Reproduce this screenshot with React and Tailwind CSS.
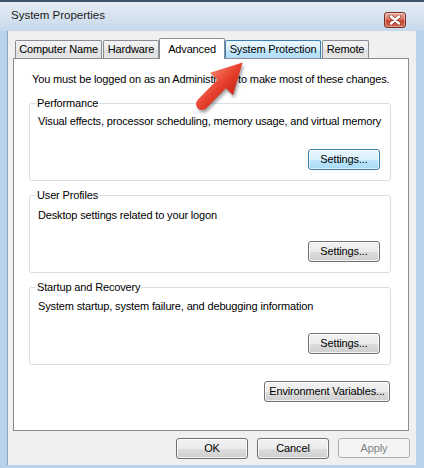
export default function App() {
  const btn =
    "h-[21px] rounded-[3px] border border-[#707070] bg-[linear-gradient(to_bottom,#f2f2f2_0%,#ebebeb_50%,#dddddd_51%,#cfcfcf_100%)] shadow-[inset_0_0_0_1px_rgba(255,255,255,0.75)] text-black flex items-center justify-center leading-none";
  const btnFocus =
    "h-[21px] rounded-[3px] border border-[#3c7fb1] bg-[linear-gradient(to_bottom,#eaf6fd_0%,#d9f0fc_50%,#bee6fd_51%,#a7d9f5_100%)] shadow-[inset_0_0_0_1px_rgba(255,255,255,0.6)] text-black flex items-center justify-center leading-none";
  const tab =
    "h-[18px] border border-b-0 border-[#898c95] rounded-t-[2px] bg-[linear-gradient(to_bottom,#f3f3f3_0%,#ebebeb_50%,#dedede_51%,#e5e5e5_100%)] flex items-center justify-center whitespace-nowrap";

  return (
    <div className="relative w-[424px] h-[468px] overflow-hidden bg-[#b9d1ea] font-['Liberation_Sans',Arial,sans-serif] text-[11px] tracking-[-0.15px] text-black flex flex-col">
      {/* title bar */}
      <div className="h-[31px] border-t-2 border-[#3e546b] bg-[linear-gradient(to_bottom,#e4ecf5,#d3e0ee_60%,#c6d9ed)] flex items-center pl-[11px] pr-[18px]">
        <span className="text-[11.5px] tracking-normal text-[#1b1b1b] mt-[-1px]">System Properties</span>
        <div className="ml-auto mt-[6px] w-[22px] h-[16px] rounded-[3px] border border-[#7c2f25] bg-[linear-gradient(to_bottom,#eab0a2_0%,#d9735f_45%,#c4442f_55%,#d06a52_100%)] shadow-[inset_0_0_0_1px_rgba(255,255,255,0.35)] flex items-center justify-center">
          <svg width="12" height="10" viewBox="0 0 12 10">
            <path d="M2 1.5 L10 8.5 M10 1.5 L2 8.5" stroke="#5b2119" strokeWidth="4" strokeLinecap="round" opacity="0.55" />
            <path d="M2 1.5 L10 8.5 M10 1.5 L2 8.5" stroke="#ffffff" strokeWidth="2.4" strokeLinecap="round" />
          </svg>
        </div>
      </div>

      {/* client area */}
      <div className="ml-[7px] mr-[8px] mb-[3px] flex-1 bg-[#f0f0f0] border-l border-[#8aa4c0] flex flex-col">
        {/* tabs */}
        <div className="relative z-10 mt-[7px] h-[20px] pl-[7px] flex items-end">
          <div className={tab + " w-[87px]"}>Computer Name</div>
          <div className={tab + " w-[56px] ml-[1px]"}>Hardware</div>
          <div className="h-[21px] mb-[-1px] w-[66px] border border-b-0 border-[#898c95] rounded-t-[2px] bg-white flex items-start justify-center pt-[2px]">
            Advanced
          </div>
          <div className="h-[18px] w-[96px] border border-b-0 border-[#3c7fb1] rounded-t-[2px] bg-[linear-gradient(to_bottom,#eaf6fd_0%,#d9f0fc_50%,#bee6fd_51%,#b3def6_100%)] flex items-center justify-center whitespace-nowrap">
            System Protection
          </div>
          <div className={tab + " w-[47px] ml-[1px]"}>Remote</div>
        </div>

        {/* panel */}
        <div className="ml-[5px] w-[396px] h-[373px] border border-[#898c95] bg-white pl-[15px] pr-[17px] flex flex-col">
          <div className="mt-[13px] pl-[3px] leading-[15px] whitespace-nowrap">
            You must be logged on as an Administrator to make most of these changes.
          </div>

          <fieldset className="mt-[9px] border border-[#d5dfe5] rounded-[3px] pl-[8px] pr-[10px] pb-[10px] min-w-0">
            <legend className="px-[1px] -ml-[2px] leading-[15px]">Performance</legend>
            <div className="mt-[3px] leading-[15px] whitespace-nowrap">
              Visual effects, processor scheduling, memory usage, and virtual memory
            </div>
            <div className="mt-[20px] flex justify-end">
              <button className={btnFocus + " w-[72px]"}>Settings...</button>
            </div>
          </fieldset>

          <fieldset className="mt-[7px] border border-[#d5dfe5] rounded-[3px] pl-[8px] pr-[10px] pb-[10px] min-w-0">
            <legend className="px-[1px] -ml-[2px] leading-[15px]">User Profiles</legend>
            <div className="mt-[5px] leading-[15px] whitespace-nowrap">Desktop settings related to your logon</div>
            <div className="mt-[18px] flex justify-end">
              <button className={btn + " w-[72px]"}>Settings...</button>
            </div>
          </fieldset>

          <fieldset className="mt-[7px] border border-[#d5dfe5] rounded-[3px] pl-[8px] pr-[10px] pb-[10px] min-w-0">
            <legend className="px-[1px] -ml-[2px] leading-[15px]">Startup and Recovery</legend>
            <div className="mt-[4px] leading-[15px] whitespace-nowrap">
              System startup, system failure, and debugging information
            </div>
            <div className="mt-[19px] flex justify-end">
              <button className={btn + " w-[72px]"}>Settings...</button>
            </div>
          </fieldset>

          <div className="mt-[16px] flex justify-end pr-[1px]">
            <button className={btn + " w-[126px]"}>Environment Variables...</button>
          </div>
        </div>

        {/* bottom buttons */}
        <div className="mt-[7px] flex justify-end gap-[9px] pr-[6px]">
          <button className={btn + " w-[72px] h-[20px]"}>OK</button>
          <button className={btn + " w-[72px] h-[20px]"}>Cancel</button>
          <button className="w-[72px] h-[20px] rounded-[3px] border border-[#adb2b5] bg-[#f4f4f4] text-[#838383] flex items-center justify-center leading-none">
            Apply
          </button>
        </div>
      </div>

      {/* red arrow overlay */}
      <svg className="absolute left-0 top-0 pointer-events-none" width="424" height="468" viewBox="0 0 424 468">
        <defs>
          <linearGradient id="arrowFill" x1="0" y1="0" x2="0" y2="1">
            <stop offset="0" stopColor="#f47a63" />
            <stop offset="0.5" stopColor="#e8412d" />
            <stop offset="1" stopColor="#c9281a" />
          </linearGradient>
          <filter id="arrowShadow" x="-30%" y="-30%" width="160%" height="160%">
            <feGaussianBlur stdDeviation="1.8" />
          </filter>
        </defs>
        <g transform="translate(202,104) rotate(-45.7)">
          <path
            d="M0,-6 L28,-6 L28,-16 L58,0 L28,16 L28,6 L0,6 A6,6 0 0 1 0,-6 Z"
            fill="rgba(0,0,0,0.35)"
            transform="translate(-1,3)"
            filter="url(#arrowShadow)"
          />
          <path d="M0,-6 L28,-6 L28,-16 L58,0 L28,16 L28,6 L0,6 A6,6 0 0 1 0,-6 Z" fill="url(#arrowFill)" />
        </g>
      </svg>
    </div>
  );
}
